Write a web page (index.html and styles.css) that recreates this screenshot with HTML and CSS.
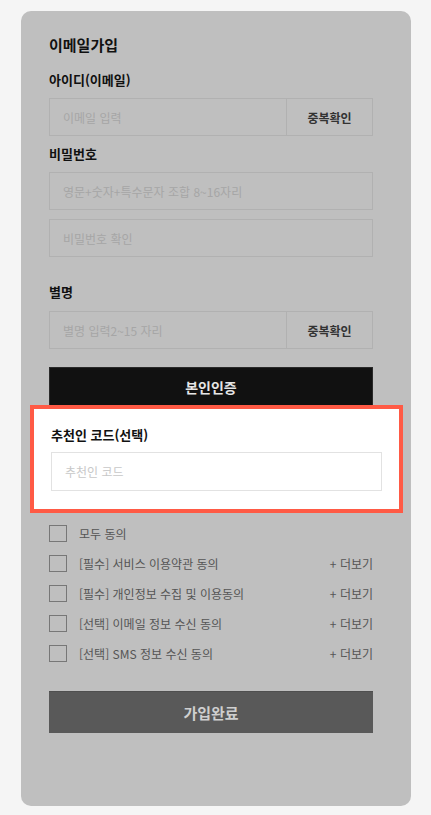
FILE: index.html
```html
<!DOCTYPE html>
<html lang="ko">
<head>
<meta charset="utf-8">
<title>이메일가입</title>
<link rel="stylesheet" href="styles.css">
</head>
<body>
<div class="card">
  <h1 class="title">이메일가입</h1>

  <div class="label first">아이디(이메일)</div>
  <div class="field-row">
    <div class="input grow">이메일 입력</div>
    <div class="side-btn">중복확인</div>
  </div>

  <div class="label">비밀번호</div>
  <div class="input">영문+숫자+특수문자 조합 8~16자리</div>
  <div class="input second">비밀번호 확인</div>

  <div class="label nick">별명</div>
  <div class="field-row nick-row">
    <div class="input grow">별명 입력2~15 자리</div>
    <div class="side-btn">중복확인</div>
  </div>

  <div class="verify-btn">본인인증</div>

  <div class="highlight">
    <div class="hl-label">추천인 코드(선택)</div>
    <div class="hl-input">추천인 코드</div>
  </div>

  <ul class="agree-list">
    <li class="agree"><span class="box"></span><span class="agree-text">모두 동의</span></li>
    <li class="agree"><span class="box"></span><span class="agree-text">[필수] 서비스 이용약관 동의</span><span class="more">+ 더보기</span></li>
    <li class="agree"><span class="box"></span><span class="agree-text">[필수] 개인정보 수집 및 이용동의</span><span class="more">+ 더보기</span></li>
    <li class="agree"><span class="box"></span><span class="agree-text">[선택] 이메일 정보 수신 동의</span><span class="more">+ 더보기</span></li>
    <li class="agree"><span class="box"></span><span class="agree-text">[선택] SMS 정보 수신 동의</span><span class="more">+ 더보기</span></li>
  </ul>

  <div class="submit-btn">가입완료</div>
</div>
</body>
</html>
```

FILE: styles.css
```css
html, body {
  margin: 0;
  padding: 0;
  background: #f5f5f5;
}
body {
  font-family: "Noto Sans CJK KR", "Noto Sans", sans-serif;
  padding: 11px 20px 9px 21px;
}
.card {
  background: #bfbfbf;
  border-radius: 10px;
  padding: 23px 38px 73px 28px;
  box-sizing: border-box;
  height: 795px;
}
.title {
  margin: 0;
  font-size: 15px;
  line-height: 22px;
  font-weight: 700;
  color: #111;
}
.label {
  margin-top: 8px;
  font-size: 13px;
  line-height: 20px;
  font-weight: 700;
  color: #111;
}
.label.first { margin-top: 14px; }
.label.nick { margin-top: 25px; }
.field-row {
  display: flex;
  margin-top: 8px;
  height: 38px;
  border: 1px solid #b1b1b1;
  box-sizing: border-box;
}
.nick-row { margin-top: 9px; }
.input {
  margin-top: 8px;
  height: 38px;
  box-sizing: border-box;
  border: 1px solid #b1b1b1;
  padding-left: 13px;
  display: flex;
  align-items: center;
  font-size: 12px;
  color: #a6a6a6;
}
.input.second { margin-top: 9px; }
.field-row .input {
  margin: 0;
  border: none;
  height: 100%;
}
.grow { flex: 1; }
.side-btn {
  width: 85px;
  border-left: 1px solid #b1b1b1;
  display: flex;
  align-items: center;
  justify-content: center;
  font-size: 12px;
  font-weight: 700;
  color: #333;
}
.verify-btn {
  margin-top: 18px;
  height: 40px;
  background: #111;
  border: 1px solid #2a2a2a;
  box-sizing: border-box;
  display: flex;
  align-items: center;
  justify-content: center;
  color: #e6e6e6;
  font-size: 14px;
  font-weight: 700;
}
.highlight {
  margin: -2px -30px 0 -19px;
  background: #fff;
  border: 4px solid #ff5a45;
  padding: 16px 17px 18px 17px;
}
.hl-label {
  font-size: 13px;
  line-height: 20px;
  font-weight: 700;
  color: #111;
}
.hl-input {
  margin-top: 7px;
  height: 39px;
  box-sizing: border-box;
  border: 1px solid #e2e2e2;
  padding-left: 13px;
  display: flex;
  align-items: center;
  font-size: 12px;
  color: #c8c8c8;
}
.agree-list {
  list-style: none;
  margin: 5px 0 0 0;
  padding: 0;
}
.agree {
  display: flex;
  align-items: center;
  height: 30px;
}
.box {
  width: 18px;
  height: 17px;
  box-sizing: border-box;
  border: 1px solid #777;
  margin-right: 12px;
  flex-shrink: 0;
}
.agree-text {
  flex: 1;
  font-size: 12px;
  color: #555;
}
.more {
  font-size: 12px;
  color: #555;
}
.submit-btn {
  margin-top: 23px;
  height: 42px;
  background: #595959;
  border-top: 1px solid #4f4f4f;
  box-sizing: border-box;
  display: flex;
  align-items: center;
  justify-content: center;
  color: #cfcfcf;
  font-size: 15px;
  font-weight: 700;
}
```
